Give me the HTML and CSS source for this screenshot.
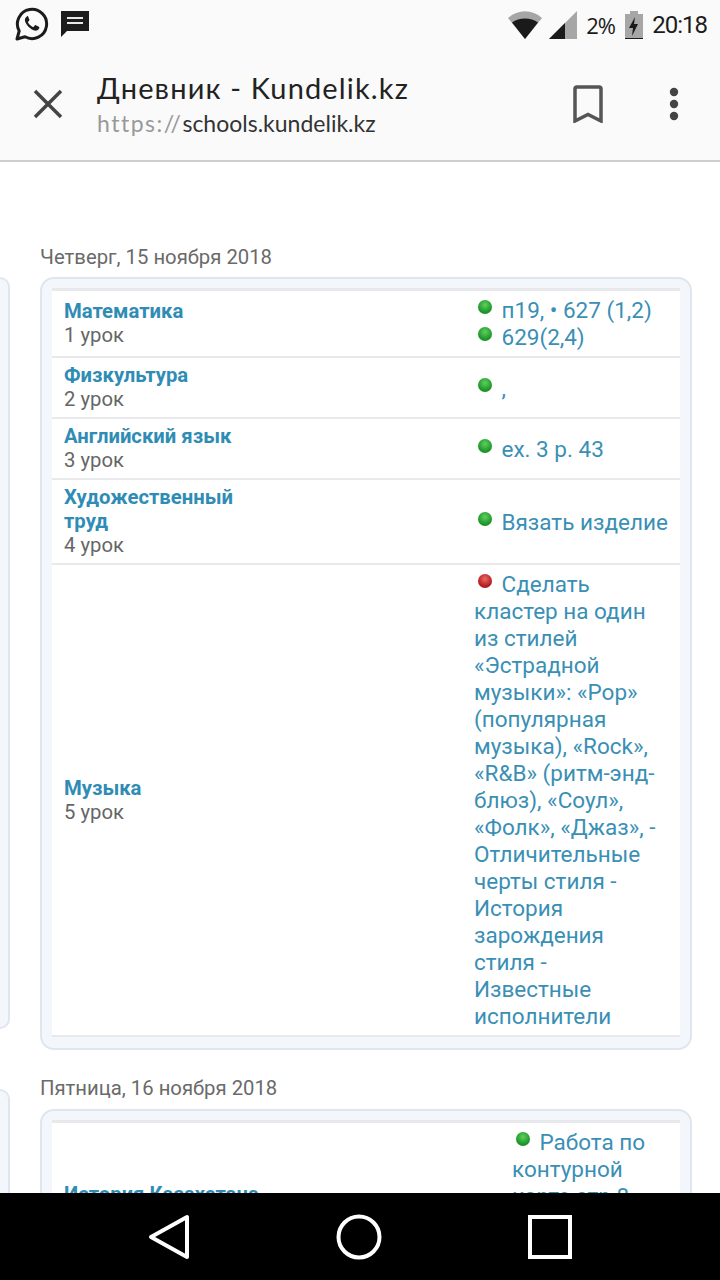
FILE: index.html
```html
<!DOCTYPE html>
<html lang="ru">
<head>
    <meta charset="UTF-8">
    <meta name="viewport" content="width=device-width, initial-scale=1.0">
    <title>Дневник - Kundelik.kz</title>
    <link rel="stylesheet" href="styles.css">
</head>
<body>
    <div class="phone">
        <header class="top">
            <div class="status-bar">
                <div class="status-left">
                    <svg class="ic-whatsapp" width="34" height="34" viewBox="0 0 34 34">
                        <path d="M2 32l2.2-8A14.6 14.6 0 1 1 10 29.800z" fill="none" stroke="#1c1c1c" stroke-width="3" stroke-linejoin="round"/>
                        <path d="M12 9.500c-1.500.5-2.500 2.500-2 4.500 1 4 5.500 8.500 9.500 9.500 2 .5 4-.5 4.700-2.200.3-.8.2-1.300-.3-1.600l-3-1.500c-.5-.2-.9 0-1.200.4l-1 1.200c-.3.3-.6.3-1 .1-2-.9-3.600-2.400-4.600-4.400-.2-.4-.1-.7.200-1l.9-1.100c.3-.3.3-.7.1-1.100l-1.200-2.800c-.3-.6-.7-.6-1.100-.5z" fill="#1c1c1c"/>
                    </svg>
                    <svg class="ic-msg" width="28" height="26" viewBox="0 0 28 26">
                        <path d="M0 0h28v20H6l-6 6z" fill="#1c1c1c"/>
                        <path d="M6 7h16M6 12h16" stroke="#e8e8e8" stroke-width="2"/>
                    </svg>
                </div>
                <div class="status-right">
                    <svg width="34" height="28" viewBox="0 0 34 28">
                        <path d="M17 28L0 7C10-2 24-2 34 7z" fill="#a6a6a6"/>
                        <path d="M17 28L4 11.500C11 6 23 6 30 11.500z" fill="#1a1a1a"/>
                    </svg>
                    <svg class="ic-signal" width="28" height="28" viewBox="0 0 28 28">
                        <path d="M0 28L28 0v28z" fill="#a6a6a6"/>
                        <path d="M0 28l16-16v16z" fill="#1a1a1a"/>
                    </svg>
                    <span class="pct">2%</span>
                    <svg class="ic-battery" width="18" height="28" viewBox="0 0 18 28">
                        <path d="M5 0h8v3h5v24H0V3h5z" fill="#a6a6a6"/>
                        <path d="M0 27h18v1H0z" fill="#1a1a1a"/>
                        <path d="M10 6l-6 11h4l-1 8 6-12H9z" fill="#1a1a1a"/>
                    </svg>
                    <span class="clock">20:18</span>
                </div>
            </div>
            <div class="toolbar">
                <svg class="ic-close" width="30" height="30" viewBox="0 0 30 30">
                    <path d="M2 2l26 26M28 2L2 28" stroke="#444" stroke-width="3.500"/>
                </svg>
                <div class="page-info">
                    <div class="page-title">Дневник - Kundelik.kz</div>
                    <div class="page-url"><span class="scheme">https://</span>schools.kundelik.kz</div>
                </div>
                <svg class="ic-bookmark" width="30" height="38" viewBox="0 0 30 38">
                    <path d="M2 36V4q0-2 2-2h22q2 0 2 2v32L15 29.500z" fill="none" stroke="#555" stroke-width="3.500"/>
                </svg>
                <svg class="ic-more" width="10" height="34" viewBox="0 0 10 34">
                    <circle cx="5" cy="5" r="4.200" fill="#444"/>
                    <circle cx="5" cy="17" r="4.200" fill="#444"/>
                    <circle cx="5" cy="29" r="4.200" fill="#444"/>
                </svg>
            </div>
        </header>

        <main class="content">
            <section class="day">
                <h3 class="day-date">Четверг, 15 ноября 2018</h3>
                <div class="day-row">
                    <div class="prev-card"></div>
                    <div class="card">
                        <table class="lessons">
                            <tr>
                                <td class="subject"><a>Математика</a><span>1 урок</span></td>
                                <td class="homework"><div><i class="dot"></i>п19, • 627 (1,2)</div><div><i class="dot"></i>629(2,4)</div></td>
                            </tr>
                            <tr>
                                <td class="subject"><a>Физкультура</a><span>2 урок</span></td>
                                <td class="homework"><i class="dot"></i>,</td>
                            </tr>
                            <tr>
                                <td class="subject"><a>Английский язык</a><span>3 урок</span></td>
                                <td class="homework"><i class="dot"></i>ex. 3 p. 43</td>
                            </tr>
                            <tr>
                                <td class="subject"><a>Художественный<br>труд</a><span>4 урок</span></td>
                                <td class="homework"><i class="dot"></i>Вязать изделие</td>
                            </tr>
                            <tr>
                                <td class="subject"><a>Музыка</a><span>5 урок</span></td>
                                <td class="homework"><i class="dot red"></i>Сделать кластер на один из стилей «Эстрадной музыки»: «Pop» (популярная музыка), «Rock», «R&amp;B» (ритм-энд-блюз), «Соул», «Фолк», «Джаз», - Отличительные черты стиля - История зарождения стиля - Известные исполнители</td>
                            </tr>
                        </table>
                    </div>
                </div>
            </section>

            <section class="day day-friday">
                <h3 class="day-date">Пятница, 16 ноября 2018</h3>
                <div class="day-row">
                    <div class="prev-card"></div>
                    <div class="card">
                        <table class="lessons">
                            <tr class="tall-row">
                                <td class="subject"><a>История Казахстана</a><span>1 урок</span></td>
                                <td class="homework"><i class="dot"></i>Работа по контурной карте стр 8</td>
                            </tr>
                        </table>
                    </div>
                </div>
            </section>
        </main>

        <nav class="nav-bar">
            <svg width="42" height="46" viewBox="0 0 42 46">
                <path d="M39 3v40L3 23z" fill="none" stroke="#fff" stroke-width="4" stroke-linejoin="round"/>
            </svg>
            <svg width="46" height="46" viewBox="0 0 46 46">
                <circle cx="23" cy="23" r="20.500" fill="none" stroke="#fff" stroke-width="4"/>
            </svg>
            <svg width="46" height="46" viewBox="0 0 46 46">
                <rect x="3" y="3" width="40" height="40" fill="none" stroke="#fff" stroke-width="4"/>
            </svg>
        </nav>
    </div>
</body>
</html>
```

FILE: styles.css
```css
html, body {
    margin: 0;
    padding: 0;
}
body {
    font-family: Roboto, Arial, sans-serif;
    background-color: #fff;
}
.phone {
    width: 720px;
    height: 1280px;
    display: flex;
    flex-direction: column;
    overflow: hidden;
}

/* Browser chrome */
.top {
    background: #fafafa;
    border-bottom: 2px solid #cfcfcf;
    height: 160px;
    flex-shrink: 0;
}
.status-bar {
    height: 48px;
    display: flex;
    justify-content: space-between;
    align-items: flex-start;
    padding: 0 13px 0 15px;
    color: #1c1c1c;
}
.status-left {
    display: flex;
    align-items: flex-start;
    gap: 12px;
    padding-top: 7px;
}
.ic-msg {
    margin-top: 4px;
}
.status-right {
    display: flex;
    align-items: center;
    padding-top: 10px;
}
.ic-signal {
    margin-left: 7px;
}
.pct {
    font-family: "Open Sans", sans-serif;
    font-size: 22px;
    width: 29px;
    margin-left: 9px;
    white-space: nowrap;
    letter-spacing: -1px;
}
.ic-battery {
    margin-left: 10px;
}
.clock {
    font-size: 24px;
    margin-left: 9px;
    letter-spacing: -1px;
}
.toolbar {
    height: 112px;
    display: flex;
    align-items: center;
    padding-left: 33px;
}
.ic-close {
    flex-shrink: 0;
}
.page-info {
    margin-left: 34px;
    width: 476px;
}
.page-title {
    font-family: Lato, sans-serif;
    font-size: 29px;
    line-height: 36px;
    color: #222;
    letter-spacing: 1.150px;
}
.page-url {
    font-family: Lato, sans-serif;
    font-size: 23px;
    line-height: 30px;
    padding-top: 2px;
    color: #333;
}
.scheme {
    color: #999;
    letter-spacing: 1.500px;
}
.ic-more {
    margin-left: 66px;
}

/* Diary */
.content {
    flex: 1;
    min-height: 0;
    overflow: hidden;
    background: #fff;
    padding-top: 83px;
}
.day {
    margin-bottom: 26px;
}
.day-date {
    margin: 0 0 8px 40px;
    font-size: 20.300px;
    line-height: 24px;
    font-weight: 400;
    color: #6a6a6a;
}
.day-friday .day-date {
    margin-bottom: 9px;
}
.day-row {
    display: grid;
    grid-template-columns: 10px 652px;
    column-gap: 30px;
}
.prev-card {
    background: #f3f6fb;
    border: 2px solid #e0e6ef;
    border-left: none;
    border-radius: 0 12px 12px 0;
    box-sizing: border-box;
    height: 752px;
    align-self: start;
}
.day-friday .prev-card {
    height: auto;
    align-self: stretch;
    margin-top: -20px;
}
.card {
    background: #f3f6fb;
    border: 2px solid #e0e6ef;
    border-radius: 14px;
    padding: 9px 10px 11px;
}
.lessons {
    width: 100%;
    background: #fff;
    border-collapse: collapse;
    border-top: 3px solid #e7e9ec;
}
.lessons td {
    padding: 5px 10px 6px 12px;
    border-bottom: 2px solid #e7e9ec;
    vertical-align: middle;
    font-size: 20.300px;
    line-height: 24px;
}
.subject a {
    display: block;
    color: #2f8cb5;
    font-weight: 700;
}
.subject span {
    display: block;
    color: #666;
}
.lessons td.homework {
    width: 195px;
    padding: 6px 11px 5px 11px;
    font-size: 22.500px;
    line-height: 27px;
    color: #3a8fb5;
}
.day-friday .lessons td.homework {
    width: 157px;
    vertical-align: top;
}
.tall-row td {
    height: 156px;
}
.dot {
    display: inline-block;
    width: 14px;
    height: 14px;
    margin: 0 9.500px 0 4px;
    border-radius: 50%;
    vertical-align: 4px;
    background: radial-gradient(circle at 50% 35%, #5fd05f, #1f9a2c 60%, #13781f);
}
.dot.red {
    background: radial-gradient(circle at 50% 35%, #e86a6a, #b92020 60%, #8d1414);
}

/* Android buttons */
.nav-bar {
    height: 87px;
    flex-shrink: 0;
    background: #000;
    display: flex;
    align-items: center;
    padding-left: 148px;
}
.nav-bar svg:nth-child(2) {
    margin-left: 146px;
}
.nav-bar svg:nth-child(3) {
    margin-left: 145px;
}
```
